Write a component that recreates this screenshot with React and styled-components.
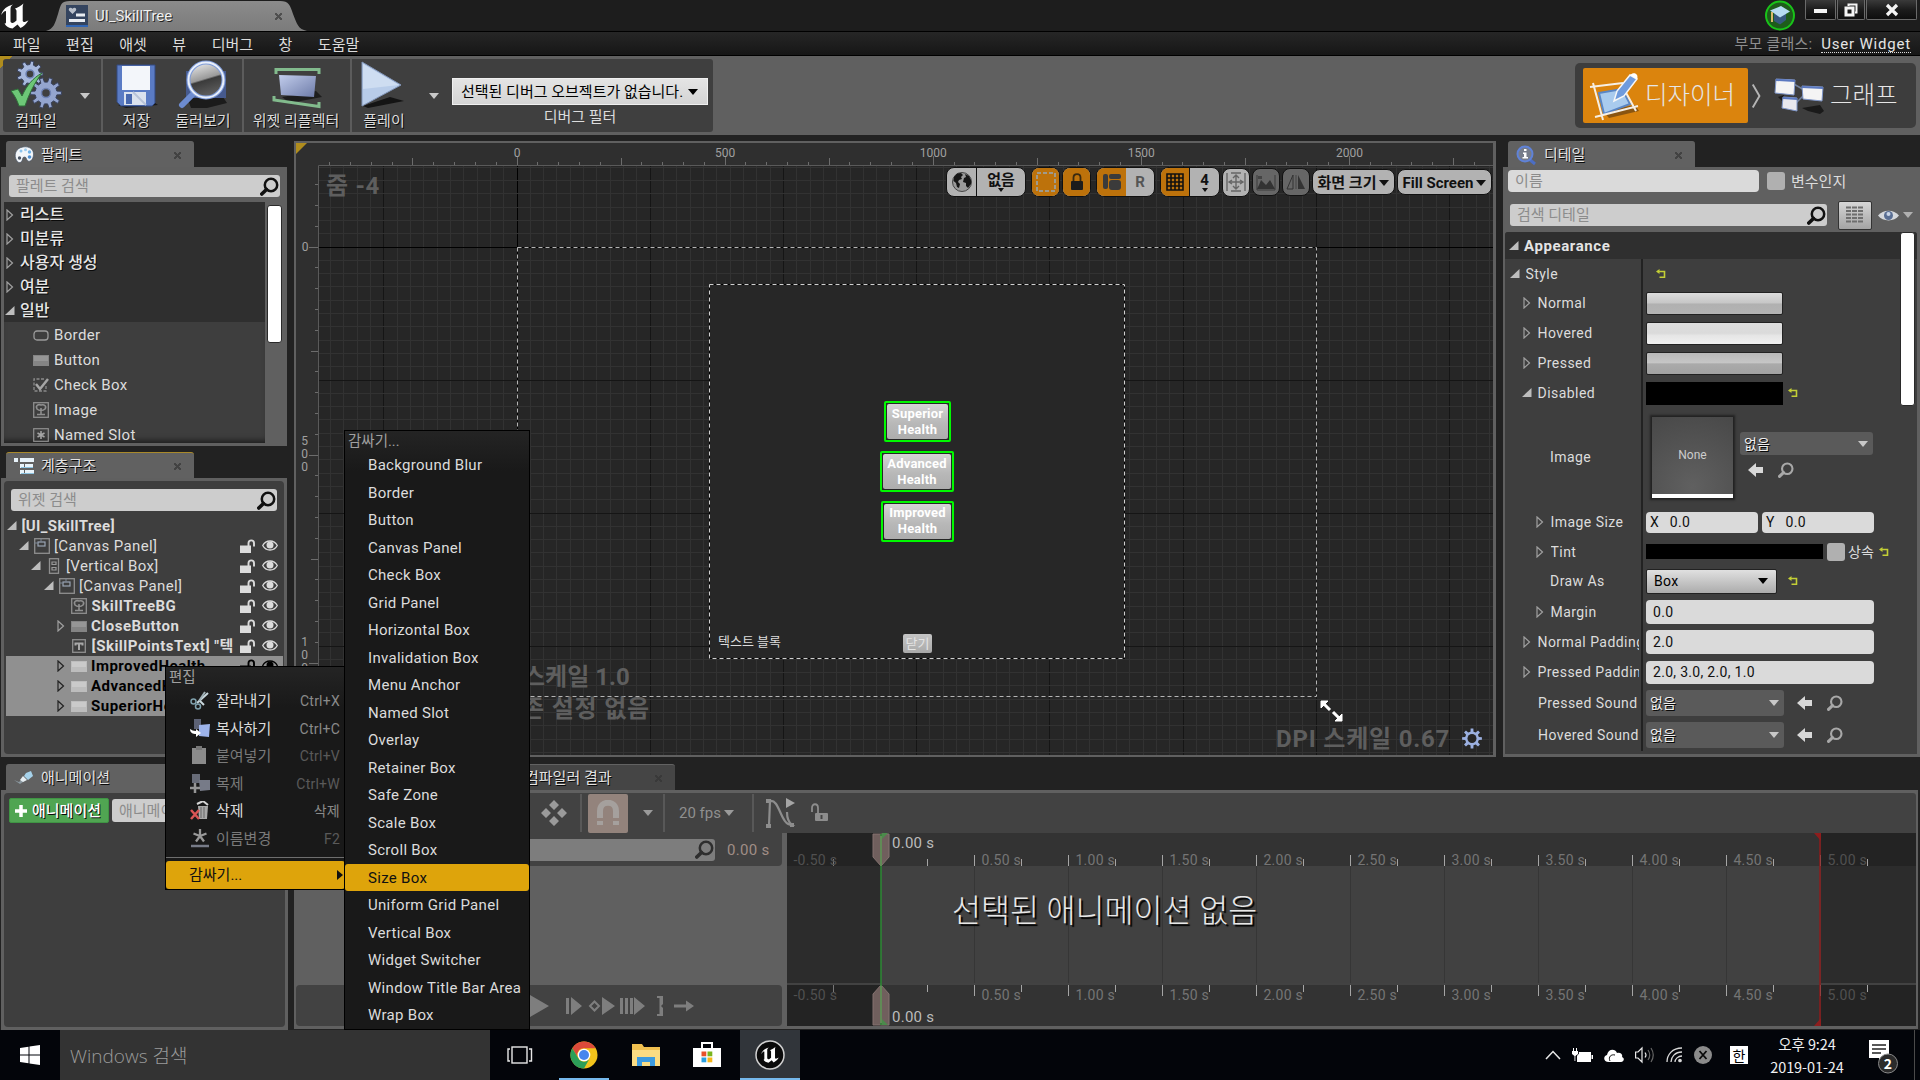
import React from "react";
import styled, { createGlobalStyle } from "styled-components";

const FONT = `Roboto, "Noto Sans CJK KR", sans-serif`;
const SHADOW = "1px 1px 0 #0a0a0a";

const GlobalStyle = createGlobalStyle`
  * { box-sizing: border-box; }
  body { margin: 0; background: #222; }
  svg { display: block; flex: none; }
`;

/* ---------- Shell ---------- */

const Shell = styled.div`
  position: relative;
  display: flex;
  flex-direction: column;
  width: 1920px;
  height: 1080px;
  overflow: hidden;
  background: #222;
  color: #dcdcdc;
  font: 15px/20px ${FONT};
  white-space: nowrap;
`;

const TitleBar = styled.header`
  display: flex;
  height: 31px;
  background: #1d1d1d;
`;
const LogoSlot = styled.div`
  width: 46px;
  padding-top: 3px;
`;
const DocTab = styled.div`
  display: flex;
  align-items: center;
  width: 261px;
  height: 30px;
  margin-top: 1px;
  padding: 0 25px 0 20px;
  background: linear-gradient(#8b8b8b, #7b7b7b);
  clip-path: path("M0 30 C8 28 9 22 12 13 C15 3 15 0 24 0 H234 C243 0 244 4 247 13 C251 23 252 28 261 30 Z");
`;
const DocTitle = styled.span`
  flex: 1;
  margin-left: 7px;
  color: #f0f0f0;
  font-size: 15px;
  text-shadow: 1px 1px 0 #222;
`;
const Cross = styled.span`
  width: 7px;
  height: 7px;
  background:
    linear-gradient(45deg, transparent 38%, #333 39%, #333 61%, transparent 62%),
    linear-gradient(-45deg, transparent 38%, #333 39%, #333 61%, transparent 62%);
  opacity: 0.65;
`;
const WindowControls = styled.div`
  display: flex;
  gap: 1px;
  margin: 0 3px 0 10px;
`;
const WindowButton = styled.div`
  display: flex;
  align-items: center;
  justify-content: center;
  width: ${(p) => p.$w}px;
  height: 20px;
  border: 1px solid #6a6a6a;
  border-top: 0;
  border-radius: 0 0 2px 2px;
  background: linear-gradient(#3a3a3a, #1c1c1c 50%, #0e0e0e);
`;
const Spacer = styled.div`
  flex: 1;
`;

const MenuBar = styled.nav`
  display: flex;
  align-items: center;
  gap: 25.5px;
  height: 25px;
  padding: 2px 9px 0 13px;
  border-top: 1px solid #000;
  border-bottom: 1px solid #000;
  background: linear-gradient(#262626, #161616);
`;
const ParentClass = styled.div`
  display: flex;
  gap: 9px;
  margin-left: auto;
  color: #8e8e8e;
  line-height: 17px;
  letter-spacing: 0.2px;
`;
const ClassLink = styled.span`
  border-bottom: 1px dotted #dcdcdc;
  height: 17px;
  color: #e4e4e4;
  letter-spacing: 0.8px;
`;

/* ---------- Top toolbar ---------- */

const ToolBar = styled.div`
  display: flex;
  justify-content: space-between;
  height: 79px;
  padding: 3px 4px 3px 3px;
  background: linear-gradient(135deg, #b08d1e 0 9px, transparent 9px), #606060;
`;
const ToolGroup = styled.div`
  display: flex;
  width: 710px;
  height: 73px;
  border-radius: 3px;
  background: #3f3f3f;
`;
const ToolSection = styled.div`
  display: flex;
  width: ${(p) => p.$w}px;
  padding-left: ${(p) => p.$pad || 0}px;
  border-right: ${(p) => (p.$last ? "0" : "2px solid #5c5c5c")};
`;
const ToolButton = styled.div`
  display: flex;
  flex-direction: column;
  align-items: center;
  width: ${(p) => p.$w}px;
  text-shadow: ${SHADOW};
  > svg { height: 50px; }
  > span { margin-top: 2px; line-height: 21px; }
`;
const Caret = styled.i`
  flex: none;
  width: 0;
  height: 0;
  margin: ${(p) => p.$m || "0"};
  border: ${(p) => p.$s || 5}px solid transparent;
  border-top: ${(p) => (p.$s || 5) + 1}px solid ${(p) => p.$c || "#c8c8c8"};
  border-bottom: 0;
`;
const DebugFilter = styled.div`
  display: flex;
  flex-direction: column;
  align-items: center;
  width: 256px;
  margin: 19px 0 0 6px;
  > span { margin-top: 2px; }
`;
const DebugCombo = styled.div`
  display: flex;
  align-items: center;
  justify-content: space-between;
  width: 256px;
  height: 27px;
  padding: 1px 9px 0 8px;
  border: 1px solid #f0f0f0;
  background: linear-gradient(#e4e4e4, #d4d4d4);
  color: #000;
`;
const ModeSwitch = styled.div`
  display: flex;
  align-items: center;
  width: 341px;
  height: 65px;
  margin-top: 4px;
  padding: 0 8px;
  border-radius: 5px;
  background: #3d3d3d;
`;
const Mode = styled.div`
  display: flex;
  align-items: center;
  gap: 6px;
  width: ${(p) => p.$w}px;
  height: 55px;
  padding-left: ${(p) => p.$pl ?? 6}px;
  border-radius: 2px;
  background: ${(p) => (p.$on ? "#db840d" : "transparent")};
  color: #e6e6e6;
  font-size: 24.5px;
  font-weight: 300;
`;

/* ---------- Docked panels ---------- */

const Workspace = styled.main`
  display: flex;
  flex-direction: column;
  gap: 7px;
  height: 895px;
  padding: 6px 0 0 1px;
`;
const UpperDock = styled.div`
  display: flex;
  gap: 7px;
  height: 616px;
`;
const LowerDock = styled.div`
  display: flex;
  gap: 6px;
  height: 266px;
`;
const LeftColumn = styled.div`
  display: flex;
  flex-direction: column;
  gap: 6px;
  width: 286px;
`;
const Dock = styled.section`
  display: flex;
  flex-direction: column;
  width: ${(p) => (p.$w ? p.$w + "px" : "auto")};
  flex: ${(p) => (p.$w ? "none" : 1)};
  min-height: 0;
`;
const PanelTab = styled.div`
  display: flex;
  align-items: center;
  flex: none;
  gap: 7px;
  width: ${(p) => p.$w || 188}px;
  height: 26px;
  margin-left: 5px;
  padding: 1px 13px 0 8px;
  border-top: 1px solid ${(p) => (p.$active ? "#a9892a" : "#626262")};
  border-radius: 3px 3px 0 0;
  background: ${(p) => p.$bg || "#616161"};
  color: #e2e2e2;
  text-shadow: ${SHADOW};
  > span:nth-child(2) { flex: 1; }
`;
const PanelBody = styled.div`
  display: flex;
  flex-direction: column;
  flex: 1;
  min-height: 0;
  padding: 3px 3px 3px ${(p) => p.$pl ?? 3}px;
  background: #606060;
`;
const PanelInner = styled.div`
  display: flex;
  flex-direction: column;
  flex: 1;
  padding: 8px 1px 0 2px;
  border-radius: 4px;
  background: #3e3e3e;
`;
const SearchField = styled.div`
  display: flex;
  align-items: center;
  justify-content: space-between;
  flex: none;
  width: ${(p) => p.$w}px;
  height: ${(p) => p.$h || 22}px;
  margin: ${(p) => p.$m || 0};
  padding: 0 1px 0 7px;
  border-radius: 3px;
  background: ${(p) => p.$bg || "#cdcdcd"};
  color: #8c8c8c;
`;

/* palette */
const PaletteScroll = styled.div`
  display: flex;
  flex: 1;
  margin-top: 5px;
  overflow: hidden;
`;
const PaletteList = styled.div`
  width: 261px;
  background: #3e3e3e;
  box-shadow: inset 0 -6px 6px -4px #1a1a1a;
`;
const Category = styled.div`
  display: flex;
  align-items: center;
  gap: 5px;
  height: 24px;
  padding: 1px 0 0 1px;
  background: #2f2f2f;
  color: #e6e6e6;
  font-size: 16px;
  font-weight: 500;
  text-shadow: ${SHADOW};
`;
const PaletteItem = styled.div`
  display: flex;
  align-items: center;
  gap: 5px;
  height: 25px;
  padding-left: 29px;
  letter-spacing: 0.35px;
`;
const ScrollThumb = styled.div`
  flex: none;
  width: 15px;
  height: ${(p) => p.$h}px;
  margin: ${(p) => p.$m};
  border: 1px solid #2a2a2a;
  border-radius: 3px;
  background: #fff;
`;

/* hierarchy */
const TreeRow = styled.div`
  display: flex;
  align-items: center;
  gap: 4.5px;
  height: 20px;
  padding: 0 5px 0 ${(p) => p.$indent}px;
  background: ${(p) => (p.$sel ? "#909090" : "transparent")};
  color: ${(p) => (p.$sel ? "#000" : "#dcdcdc")};
  font-weight: ${(p) => (p.$bold ? 700 : 400)};
  letter-spacing: ${(p) => (p.$bold && !p.$root ? 0.5 : 0.35)}px;
`;
const TreeLabel = styled.span`
  flex: 1;
  min-width: 0;
  overflow: hidden;
`;
const TreeActions = styled.span`
  display: flex;
  gap: 6px;
`;

/* ---------- Designer ---------- */

const Designer = styled.section`
  position: relative;
  width: 1202px;
  height: 616px;
  border: 2px solid #606060;
  border-right-width: 3px;
  background: #262626;
  overflow: hidden;
`;
const OnCanvas = styled.div`
  position: absolute;
  left: ${(p) => p.$x}px;
  top: ${(p) => p.$y}px;
  font-size: ${(p) => p.$fs || 15}px;
`;
const Hud = styled(OnCanvas)`
  color: #5e5e5e;
  font-size: 24px;
  font-weight: 700;
  line-height: 30px;
  letter-spacing: ${(p) => p.$ls || 0}px;
`;
const ViewTools = styled.div`
  position: absolute;
  top: 24px;
  right: 1px;
  display: flex;
  align-items: center;
  gap: 2px;
  height: 30px;
`;
const Pill = styled.div`
  display: flex;
  height: ${(p) => p.$h || 30}px;
  margin-left: ${(p) => p.$ml || 0}px;
  border: 1px solid #111;
  border-radius: 8px;
  overflow: hidden;
  background: ${(p) => p.$bg || "#b2b2b2"};
  color: #111;
  font-weight: 700;
`;
const PillCell = styled.div`
  position: relative;
  display: flex;
  align-items: center;
  justify-content: center;
  gap: 3px;
  width: ${(p) => p.$w}px;
  padding: ${(p) => p.$pt || 0}px 0 ${(p) => p.$pb || 0}px;
  border-left: ${(p) => (p.$div ? "1px solid #111" : "0")};
  background: ${(p) => (p.$on ? "#bd720b" : "transparent")};
  color: ${(p) => p.$c || "#111"};
`;
const TinyCaret = styled(Caret)`
  position: absolute;
  bottom: 4px;
  left: calc(50% - 3px);
`;
const WidgetButton = styled(OnCanvas)`
  width: ${(p) => p.$w}px;
  height: 41px;
  padding: 1px;
  border: 2px solid #00f800;
  border-radius: 2px;
  background: #262626;
`;
const WidgetFace = styled.div`
  height: 100%;
  padding-top: ${(p) => p.$pt ?? 2}px;
  border-radius: 2px;
  background: linear-gradient(#d4d4d4, #b8b8b8 55%, #adadad);
  color: #fff;
  font-size: 13px;
  font-weight: 700;
  line-height: 15.5px;
  letter-spacing: 0.2px;
  text-align: center;
`;
const CloseWidget = styled(OnCanvas)`
  width: 29px;
  height: 19px;
  border-radius: 2px;
  background: linear-gradient(#c4c4c4, #a9a9a9);
  color: #e4e4e4;
  font-size: 13px;
  line-height: 19px;
  text-align: center;
`;

/* ---------- Details ---------- */

const NameRow = styled.div`
  display: flex;
  flex: none;
  align-items: center;
  height: 22px;
  padding-left: 3px;
  > span:last-child { padding-top: 2px; }
`;
const FilterRow = styled.div`
  display: flex;
  flex: none;
  align-items: center;
  height: 40px;
  padding: 6px 0 0 5px;
`;
const TextField = styled.div`
  width: ${(p) => p.$w}px;
  height: ${(p) => p.$h || 22}px;
  padding-left: 7px;
  border-radius: 4px;
  background: #dadada;
  color: ${(p) => p.$c || "#111"};
  font-size: ${(p) => p.$fs || 14}px;
  line-height: ${(p) => p.$h || 22}px;
  letter-spacing: 0.3px;
`;
const AxisField = styled(TextField)`
  padding-left: 4px;
  margin-right: 4px;
  word-spacing: 7px;
`;
const CheckBox = styled.span`
  width: 18px;
  height: 18px;
  margin: 0 ${(p) => p.$mr || 6}px 0 ${(p) => p.$ml || 8}px;
  border-radius: 3px;
  background: #b0b0b0;
`;
const Inherit = styled.span`
  margin-right: 5px;
  font-size: 14px;
`;
const GridButton = styled.div`
  display: flex;
  align-items: center;
  justify-content: center;
  width: 34px;
  height: 29px;
  margin: 0 6px 0 11px;
  border: 1px solid #333;
  border-radius: 2px;
  background: linear-gradient(#d6d6d6, #a4a4a4);
`;
const PropertyArea = styled.div`
  position: relative;
  flex: 1;
  width: 412px;
  background: #3e3e3e;
  border-radius: 3px 3px 0 0;
`;
const SectionHead = styled.div`
  display: flex;
  align-items: center;
  gap: 5px;
  height: 27px;
  padding-left: 4px;
  border-radius: 3px 3px 0 0;
  background: #2f2f2f;
  color: #e4e4e4;
  font-size: 15px;
  font-weight: 700;
  letter-spacing: 0.6px;
`;
const PropRow = styled.div`
  display: flex;
  height: ${(p) => p.$h}px;
`;
const PropName = styled.div`
  display: flex;
  align-items: center;
  gap: 5.5px;
  width: 138px;
  padding-left: ${(p) => p.$indent}px;
  padding-right: 2px;
  border-right: 2px solid #222;
  font-size: 14px;
  letter-spacing: 0.45px;
  overflow: hidden;
  > span { overflow: hidden; flex: 1; }
`;
const PropValue = styled.div`
  display: flex;
  align-items: center;
  padding-left: ${(p) => p.$pl ?? 3}px;
`;
const Swatch = styled.div`
  width: ${(p) => p.$w}px;
  height: ${(p) => p.$h}px;
  margin-right: ${(p) => p.$mr || 0}px;
  border: ${(p) => (p.$flat ? "0" : "1px solid #222")};
  border-radius: ${(p) => (p.$flat ? 0 : 2)}px;
  background: ${(p) => p.$bg};
`;
const Thumb = styled.div`
  display: flex;
  align-items: center;
  justify-content: center;
  width: 81px;
  height: 81px;
  margin: 0 7px 0 6px;
  border-bottom: 4px solid #fff;
  background: radial-gradient(circle at 50% 90%, #606060, #484848);
  box-shadow: 0 0 2px 2px #222;
  font-size: 12px;
  color: #ccc;
`;
const AssetCombo = styled.div`
  display: flex;
  align-items: center;
  justify-content: space-between;
  width: ${(p) => p.$w}px;
  height: ${(p) => p.$h}px;
  padding: 0 5px 0 4px;
  border-radius: 3px;
  background: #5a5a5a;
  color: #eee;
  font-size: 14px;
  text-shadow: ${SHADOW};
`;
const AssetStack = styled.div`
  display: flex;
  flex-direction: column;
  gap: 7px;
  margin-top: -4px;
`;
const AssetButtons = styled.div`
  display: flex;
  align-items: center;
  gap: 15px;
  padding-left: ${(p) => p.$pl || 0}px;
`;
const EnumCombo = styled.div`
  display: flex;
  align-items: center;
  justify-content: space-between;
  width: 131px;
  height: 25px;
  margin-right: 11px;
  padding: 0 8px 0 7px;
  border: 1px solid #222;
  border-radius: 2px;
  background: linear-gradient(#e0e0e0, #acacac);
  color: #000;
  font-size: 14px;
  letter-spacing: 0.3px;
`;
const PropScroll = styled(ScrollThumb)`
  position: absolute;
  top: 0;
  right: 2px;
`;

/* ---------- Animation + timeline ---------- */

const AnimBar = styled.div`
  display: flex;
  gap: 3px;
  margin: -3px 0 0 3px;
`;
const AddAnimation = styled.div`
  display: flex;
  align-items: center;
  gap: 4px;
  width: 100px;
  height: 25px;
  padding: 1px 0 0 4px;
  border: 1px solid #3f9444;
  border-radius: 2px;
  background: #50a552;
  color: #fff;
  font-weight: 500;
  text-shadow: ${SHADOW};
`;
const SequencerBody = styled.div`
  display: flex;
  flex-direction: column;
  height: 239px;
  width: 1624px;
  padding: 3px 2px 3px 2px;
  background: #606060;
`;
const TabGap = styled.i`
  width: 211px;
`;
const SeqToolbar = styled.div`
  display: flex;
  align-items: center;
  height: 40px;
  padding-left: 245px;
  border-radius: 3px 3px 0 0;
  background: #424242;
  color: #8f8f8f;
`;
const SeqDivider = styled.i`
  width: 2px;
  height: 38px;
  margin: 0 ${(p) => p.$mr}px 0 ${(p) => p.$ml}px;
  background: #585858;
`;
const SnapButton = styled.div`
  display: flex;
  align-items: center;
  justify-content: center;
  width: 40px;
  height: 39px;
  border-radius: 2px;
  background: #93837c;
`;
const SeqSplit = styled.div`
  display: flex;
  gap: 5px;
  flex: 1;
`;
const TrackColumn = styled.div`
  display: flex;
  flex-direction: column;
  justify-content: space-between;
  width: 486px;
`;
const TrackSearch = styled.div`
  display: flex;
  align-items: center;
  gap: 12px;
  height: 33px;
  padding-left: 48px;
  border-radius: 0 0 4px 4px;
  background: #424242;
  color: #a08e86;
  letter-spacing: 0.3px;
`;
const Transport = styled.div`
  display: flex;
  align-items: center;
  height: 41px;
  padding-left: 231px;
  border-radius: 4px;
  background: #424242;
`;
const Timeline = styled.div`
  position: relative;
  width: 1129px;
`;
const EmptyNotice = styled.div`
  position: absolute;
  left: 165px;
  top: 58px;
  color: #e8e8e8;
  font-size: 31.5px;
  font-weight: 300;
  line-height: 41px;
  text-shadow: 2px 2px 1px #000;
`;

/* ---------- Popup menus ---------- */

const Popup = styled.div`
  position: absolute;
  left: ${(p) => p.$x}px;
  top: ${(p) => p.$y}px;
  width: ${(p) => p.$w}px;
  height: ${(p) => p.$h}px;
  border: 1px solid #000;
  background: linear-gradient(#242424, #191919 40px);
`;
const PopupTitle = styled.div`
  height: 20px;
  padding-left: 3px;
  color: #a0a0a0;
  font-size: 14.5px;
  line-height: 21px;
`;
const PopupItem = styled.div`
  display: flex;
  align-items: center;
  height: 27.5px;
  padding: 1px ${(p) => p.$pr || 0}px 0 ${(p) => p.$pl || 23}px;
  border-radius: 3px;
  background: ${(p) => (p.$on ? "#dea40b" : "transparent")};
  color: ${(p) => (p.$on ? "#111" : p.$off ? "#7a7a7a" : "#dcdcdc")};
  letter-spacing: ${(p) => p.$ls || 0}px;
`;
const ItemLabel = styled.span`
  flex: 1;
  margin-left: ${(p) => p.$ml || 0}px;
`;
const Shortcut = styled.span`
  color: ${(p) => (p.$off ? "#5a5a5a" : "#8a8a8a")};
  font-size: 14px;
  letter-spacing: 0.25px;
`;
const PopupRule = styled.div`
  height: 1px;
  margin: 5px 0 3px;
  background: #6e6e6e;
`;

/* ---------- Windows taskbar ---------- */

const TaskBar = styled.footer`
  display: flex;
  height: 50px;
  background: #03050a;
  font-family: "Noto Sans CJK KR", sans-serif;
`;
const StartButton = styled.div`
  display: flex;
  align-items: center;
  justify-content: center;
  width: 60px;
`;
const TaskSearch = styled.div`
  width: 430px;
  padding-left: 10px;
  background: #333;
  color: #9b9b9b;
  font: 300 19px/52px "Open Sans", "Noto Sans CJK KR", sans-serif;
`;
const TaskButton = styled.div`
  display: flex;
  align-items: center;
  justify-content: center;
  width: ${(p) => p.$w}px;
  padding-top: 2px;
  border-bottom: 2px solid ${(p) => (p.$run ? "#76b9ed" : "transparent")};
  margin: 0 ${(p) => p.$mx || 0}px;
  background: ${(p) => (p.$on ? "#31353a" : "transparent")};
`;
const Tray = styled.div`
  display: flex;
  align-items: center;
  gap: 11px;
  margin-left: auto;
`;
const Ime = styled.span`
  width: 18px;
  height: 18px;
  margin: 0 0 0 7px;
  background: #fff;
  color: #000;
  font-size: 14px;
  line-height: 18px;
  text-align: center;
`;
const Clock = styled.div`
  width: 80px;
  margin: 0 9px 0 8px;
  color: #f0f0f0;
  font-size: 14.5px;
  line-height: 23px;
  letter-spacing: -0.1px;
  text-align: center;
`;
const PeekEdge = styled.i`
  width: 1px;
  height: 50px;
  margin: 0 5px 0 4px;
  background: #4a4a4a;
`;

/* ---------- Icons ---------- */

function gear(cx, cy, ro, ri, n) {
  let d = "";
  for (let i = 0; i < n; i++) {
    const a = (i / n) * Math.PI * 2;
    const s = Math.PI / n;
    [[-0.55, ri], [-0.35, ro], [0.35, ro], [0.55, ri]].forEach(([k, r], j) => {
      const x = cx + Math.cos(a + k * s) * r;
      const y = cy + Math.sin(a + k * s) * r;
      d += `${i === 0 && j === 0 ? "M" : "L"}${x.toFixed(2)} ${y.toFixed(2)}`;
    });
  }
  return d + "Z";
}

const UNREAL = "M1 12C3 6 7 3 13 1.500C11 3 10.500 4 10.500 6V18.500C11.200 20 12.500 20.400 14 19.500L16.500 17.500V8C16.500 6.800 15.600 6 14.800 5.800C17.500 4.800 21.500 2.500 23.500.5C22.700 2.500 22.700 3.600 22.700 5V18C23.400 19.600 24.800 19.500 28.500 17.300C26.500 21 23.500 23.500 20.500 25L17.500 21.500L12.500 25.500C9 25 6 23.500 4.500 20.500C5.500 20.600 6 20.200 6 19V8.500C6 7.500 4.500 7.200 1 12Z";

const UnrealMark = () => (
  <svg width="30" height="26" viewBox="0 0 30 26"><path fill="#fff" d={UNREAL} /></svg>
);
const WidgetIcon = () => (
  <svg width="22" height="22" viewBox="0 0 22 22">
    <rect width="22" height="22" fill="#34445f" />
    <rect y="20" width="22" height="2" fill="#2f65b5" />
    <path fill="#b9c0cb" d="M6.500 9L3 5.500C2 3.500 4.500 1.500 6.500 3.800C8.500 1.500 11 3.500 10 5.500Z" />
    <path fill="#e8ecf2" d="M10 8.500H19V11.500H10ZM3 14H19V17H3Z" />
  </svg>
);
const Magnifier = ({ s = 19, c = "#111", w = 2.8 }) => (
  <svg width={s} height={s} viewBox="0 0 19 19" fill="none" stroke={c}>
    <circle cx="11" cy="8" r="6.200" strokeWidth={w * 0.9} />
    <path d="M6.500 12.500L1.800 17" strokeWidth={w * 1.3} strokeLinecap="round" />
  </svg>
);
const GraduationBadge = () => (
  <svg width="30" height="31" viewBox="0 0 30 31">
    <circle cx="15" cy="15.500" r="14" fill="#1e5c1b" stroke="#19c319" strokeWidth="2" />
    <path fill="#35587d" d="M9 14V21L15 24.500L21 20V13Z" />
    <path fill="#b5dcf2" d="M5 10.500L16 6L25 11.500L15 17.500Z" />
    <path d="M7 12V22" stroke="#d9b96c" strokeWidth="2" />
  </svg>
);
const CompileIcon = () => (
  <svg width="54" height="50" viewBox="0 0 54 50">
    <path d={gear(21, 15, 13, 9.5, 9)} fill="#a7b8dd" stroke="#38415c" />
    <circle cx="21" cy="15" r="4" fill="#3f3f3f" stroke="#6f83b5" strokeWidth="1.500" />
    <path d={gear(37, 34, 15.5, 11, 10)} fill="#94a5cf" stroke="#38415c" />
    <circle cx="37" cy="34" r="4.500" fill="#3f3f3f" stroke="#6f83b5" strokeWidth="1.500" />
    <path d="M2 32L9 30L13 37C18 26 24 19 33 14C26 23 20 35 16 47H10C8 41 6 37 2 32Z" fill="#6dc777" stroke="#2e6f38" />
  </svg>
);
const SaveIcon = () => (
  <svg width="44" height="50" viewBox="0 0 44 50">
    <path d="M38 42L44 46L12 49L4 46Z" fill="#191919" />
    <path d="M3 6H41V44L38 47H7L3 43Z" fill="#5a7bc4" stroke="#334a82" />
    <rect x="8" y="7" width="28" height="24" fill="#f3f6fa" />
    <rect x="10" y="33" width="22" height="13" fill="#dbe2ee" />
    <rect x="12" y="35" width="6" height="10" fill="#4868af" />
    <path d="M19 33L32 46" stroke="#b8c3d8" strokeWidth="2" />
  </svg>
);
const BrowseIcon = () => (
  <svg width="52" height="50" viewBox="0 0 52 50">
    <defs>
      <linearGradient id="lens" x1="0" y1="0" x2="0.300" y2="1">
        <stop offset="0" stopColor="#f4f4f4" />
        <stop offset="0.550" stopColor="#9a9a9a" />
        <stop offset="0.600" stopColor="#3b3b3b" />
        <stop offset="1" stopColor="#5c5c5c" />
      </linearGradient>
    </defs>
    <path d="M10 38H46L50 44L30 49H14Z" fill="#1b1b1b" />
    <rect x="9" y="12" width="40" height="27" fill="#465a8e" />
    <path d="M5 46L17 34" stroke="#6d8cd0" strokeWidth="6" strokeLinecap="round" />
    <circle cx="29" cy="21" r="17.500" fill="url(#lens)" stroke="#7e9bd8" strokeWidth="4" />
    <circle cx="29" cy="21" r="17.500" fill="none" stroke="#e9effa" strokeWidth="2" />
  </svg>
);
const ReflectorIcon = () => (
  <svg width="52" height="50" viewBox="-2 0 52 50">
    <defs>
      <linearGradient id="refl" x1="0" y1="0" x2="1" y2="1">
        <stop offset="0" stopColor="#c2cdec" />
        <stop offset="1" stopColor="#6d7ba8" />
      </linearGradient>
    </defs>
    <path d="M10 38L44 32L50 38L18 44Z" fill="#1d1d1d" />
    <path d="M7 16L44 17L42 38L9 36Z" fill="url(#refl)" />
    <path d="M4 15V10.500H47V15M2 37V41L47 47.500V43" fill="none" stroke="#82bb8d" strokeWidth="3" />
  </svg>
);
const PlayBig = () => (
  <svg width="46" height="50" viewBox="1 0 46 50">
    <path d="M3 47L30 38L44 42L8 49Z" fill="#141414" />
    <path d="M2 3L41 26L2 47Z" fill="#b8cce9" stroke="#8296b9" />
    <path d="M3 5L39 26L3 30Z" fill="#ceddf1" />
  </svg>
);
const DesignerIcon = () => (
  <svg width="50" height="50" viewBox="0 0 50 50">
    <path d="M14 40L46 34L50 40L20 47Z" fill="#8a5510" />
    <path d="M10 22L33 18L41 33L15 43Z" fill="#a9cbee" stroke="#5a86c5" strokeWidth="2" />
    <path d="M1 16L34 12M4 12L14 49M6 46L49 35M35 18L47 40" stroke="#f6efe4" strokeWidth="2" fill="none" />
    <path d="M25 30L28 20L41 4L48 8L35 25Z" fill="#6f9bdd" stroke="#f7f7f7" strokeWidth="1.500" />
    <path d="M41 4L48 8C50 3 45 0 41 4Z" fill="#fff" />
  </svg>
);
const GraphIcon = () => (
  <svg width="50" height="42" viewBox="0 0 50 42">
    <path d="M28 33L46 30L50 36L46 39L34 36ZM4 22L10 20L10 28Z" fill="#1a1a1a" />
    <path d="M18 8L32 16M22 28L32 18" stroke="#71809d" strokeWidth="1.500" />
    <g stroke="#7f96c9">
      <path d="M2 4L21 5L20 20L1 18Z" fill="#f4f4f4" />
      <path d="M28 11L49 12L48 26L29 24Z" fill="#f4f4f4" />
      <path d="M9 22L23 23L23 36L8 33Z" fill="#e8e8ee" />
    </g>
    <path d="M2 4L21 5V7L2 6ZM28 11L49 12V14L28 13ZM9 22L23 23V25L9 24Z" fill="#5a78c0" />
  </svg>
);
const PaletteGlyph = () => (
  <svg width="20" height="18" viewBox="0 0 20 18">
    <path fill="#f2f6fa" stroke="#3d4a5c" strokeWidth=".6" d="M3 15C-1 9 2 2 9 1C15 0 20 3 19.500 9C19 14 16 16 14 15C12 14 13 11 10.500 11C8 11 9 14 7.500 15.500C6.500 17 4 17 3 15Z" />
    <circle cx="7" cy="5" r="1.500" fill="#8cc4ee" />
    <circle cx="11.500" cy="3.800" r="1.500" fill="#a2cdec" />
    <circle cx="15.500" cy="6" r="1.700" fill="#6fb2e6" />
    <circle cx="15.500" cy="11" r="1.800" fill="#4e8fd0" />
    <circle cx="5.500" cy="12" r="1.700" fill="#4a5666" />
  </svg>
);
const HierarchyGlyph = () => (
  <svg width="20" height="16" viewBox="0 0 20 16">
    <path fill="#e8f3fa" d="M0 0H4V4H0ZM6 0H20V4H6ZM6 6H10V10H6ZM11 6H19V10H11ZM6 12H10V16H6ZM11 12H20V16H11Z" />
    <path fill="#8bc1df" d="M7 9H19V10H7ZM7 15H20V16H7Z" />
  </svg>
);
const InfoGlyph = () => (
  <svg width="21" height="21" viewBox="0 0 21 21">
    <path d="M13 14L19 19" stroke="#4c6ec4" strokeWidth="3" />
    <circle cx="9" cy="9" r="7.500" fill="#777d8a" stroke="#5f82d8" strokeWidth="2" />
    <path d="M8 4H10.500V6H8ZM7 7.500H10.500V12H12V13.500H6.500V12H8V9H7Z" fill="#fff" />
  </svg>
);
const BrushGlyph = () => (
  <svg width="20" height="16" viewBox="0 0 20 16">
    <path d="M0 10L6 14L12 10L8 9L5 12Z" fill="#8b98a0" />
    <path d="M9 6L13 10L9 12L6 10Z" fill="#e6eef2" />
    <path d="M12 3L17 1L19 6L14 10L10 6Z" fill="#a6d2ea" />
  </svg>
);
const Arrow = ({ open, sel }) =>
  open ? (
    <svg width="10" height="10" viewBox="0 0 10 10"><path d="M9.500 0V9H0Z" fill="#bdbdbd" /></svg>
  ) : (
    <svg width="10" height="12" viewBox="0 0 10 12"><path d="M2 1L7.500 6L2 11Z" fill="none" stroke={sel ? "#222" : "#a0a0a0"} strokeWidth="1.200" /></svg>
  );

const KIND = {
  border: <rect x="1" y="4" width="14" height="9" rx="3" fill="none" stroke="#9a9a9a" strokeWidth="1.300" />,
  button: <><rect x="0" y="3" width="16" height="11" fill="#848484" /><rect x="1" y="4" width="14" height="5" fill="#969696" /></>,
  check: <><path d="M11 2H1V14H13V8" fill="none" stroke="#8a8a8a" strokeDasharray="3 1.500" strokeWidth="1.300" /><path d="M3 7L7 12L15 2" fill="none" stroke="#a5a5a5" strokeWidth="2.500" /></>,
  image: <><rect x=".7" y=".7" width="14.600" height="14.600" fill="none" stroke="#8f8f8f" strokeWidth="1.300" /><path d="M4 7C2 3 6 2 8 3C11 2 14 4 12 7C10 9 6 9 4 7ZM8 6V12M4 12.500H12" fill="none" stroke="#8f8f8f" strokeWidth="1.600" /></>,
  slot: <><rect x=".7" y="1.700" width="14.600" height="12.600" fill="none" stroke="#8f8f8f" strokeWidth="1.200" /><path d="M8 4V12M4.500 6L11.500 10M11.500 6L4.500 10" stroke="#a5a5a5" strokeWidth="1.500" /></>,
  canvas: <><rect x=".7" y=".7" width="14.600" height="14.600" fill="none" stroke="#8f8f8f" strokeWidth="1.300" /><rect x="4" y="4" width="7" height="4" fill="none" stroke="#9aa5b5" strokeWidth="1.200" /><path d="M0 5H4M7 0V4" stroke="#7d8794" /></>,
  vbox: <><rect x="3.500" y=".7" width="9" height="14.600" fill="none" stroke="#8f8f8f" strokeWidth="1.300" /><path d="M6 4H10V6.500H6ZM6 9.500H10V12H6Z" fill="none" stroke="#9a9a9a" strokeWidth="1.200" /></>,
  text: <><rect x="1.700" y="1.700" width="12.600" height="12.600" fill="none" stroke="#8f8f8f" strokeWidth="1.300" /><path d="M4.500 5.500H11.500M4.500 4.500V7.500M11.500 4.500V7.500M8 4.500V12" fill="none" stroke="#a8a8a8" strokeWidth="2" /></>,
  selbutton: <><rect x="0" y="3" width="16" height="11" fill="#bdbdbd" /><rect x="1" y="4" width="14" height="5" fill="#cacaca" /></>,
};
const KindIcon = ({ k }) => <svg width="16" height="16" viewBox="0 0 16 16">{KIND[k]}</svg>;

const OpenLock = ({ c }) => (
  <svg width="16" height="15" viewBox="0 0 16 15">
    <rect x="0" y="6.500" width="11" height="7.500" fill={c} />
    <path d="M8.500 7V4C8.500 .5 14 .5 14 4V7.500" fill="none" stroke={c} strokeWidth="1.900" />
  </svg>
);
const Eye = ({ c }) => (
  <svg width="16" height="13" viewBox="0 0 16 13">
    <path d="M.7 6.500C4 .5 12 .5 15.300 6.500C12 12.500 4 12.500 .7 6.500Z" fill="none" stroke={c} strokeWidth="1.300" />
    <circle cx="8" cy="6" r="3.500" fill={c} />
  </svg>
);
const ResetArrow = () => (
  <svg width="10" height="10" viewBox="0 0 10 10">
    <path d="M1.500 2.500H8.500V8.300H3.500" fill="none" stroke="#c3cf36" strokeWidth="1.600" />
    <path d="M0 2.500L3.500 0V5Z" fill="#c3cf36" />
  </svg>
);
const UseArrow = () => (
  <svg width="15" height="14" viewBox="0 0 15 14">
    <path d="M0 7L8 0V4H15V10H8V14Z" fill="#d8d8d8" />
  </svg>
);

const MENU_ICON = {
  cut: <><path d="M7 12L18 2M9 9L14 14" stroke="#c9d8dd" strokeWidth="2" /><path d="M9 10L15 1" stroke="#9fb0b6" strokeWidth="2" /><circle cx="3.500" cy="10.500" r="2.500" fill="none" stroke="#7fa0ac" strokeWidth="1.500" /><circle cx="8" cy="15.500" r="2.500" fill="none" stroke="#7fa0ac" strokeWidth="1.500" /></>,
  copy: <><path d="M4 0H11V10H4Z" fill="#5d6275" /><path d="M9 6L20 5L19 18L9 17Z" fill="#9db3ea" /><path d="M0 10C0 14 3 15 6 15V18L11 14L6 10V12C3 12 2 11 0 10Z" fill="#fff" /></>,
  paste: <><path d="M2 2H16V18H2Z" fill="#8b8b8b" /><path d="M6 0H12V4H6Z" fill="#777" /></>,
  dup: <><path d="M2 0H10V9H2Z" fill="#686c78" /><path d="M9 6H20V16L10 17Z" fill="#777b88" /><path d="M5 9V19M0 14H10" stroke="#959595" strokeWidth="2.500" /></>,
  del: <><path d="M8 5H18L17 18H9Z" fill="#a8a8a8" /><path d="M7 3L13 0L18 4" fill="none" stroke="#d5d5d5" strokeWidth="2" /><path d="M11 6V17M14 6V17" stroke="#666" /><path d="M1 9L9 18M9 9L1 18" stroke="#d95555" strokeWidth="2.500" /></>,
  rename: <><path d="M10 0V7M3.500 4.500L10 7L16.500 4.500M6 12.500L10 7L14 12.500" stroke="#999" strokeWidth="2.300" fill="none" /><path d="M1 17H19" stroke="#777b88" strokeWidth="2.500" /></>,
};

/* ---------- Data ---------- */

const PALETTE_GROUPS = ["리스트", "미분류", "사용자 생성", "여분"];
const PALETTE_ITEMS = [["border", "Border"], ["button", "Button"], ["check", "Check Box"], ["image", "Image"], ["slot", "Named Slot"]];

const TREE = [
  { i: 1, open: true, label: "[UI_SkillTree]", bold: true, root: true },
  { i: 13, open: true, k: "canvas", label: "[Canvas Panel]" },
  { i: 25, open: true, k: "vbox", label: "[Vertical Box]" },
  { i: 38, open: true, k: "canvas", label: "[Canvas Panel]" },
  { i: 65, k: "image", label: "SkillTreeBG", bold: true },
  { i: 50, open: false, k: "button", label: "CloseButton", bold: true },
  { i: 65, k: "text", label: '[SkillPointsText] "텍', bold: true },
  { i: 50, open: false, k: "selbutton", label: "ImprovedHealth", bold: true, sel: true },
  { i: 50, open: false, k: "selbutton", label: "AdvancedHealth", bold: true, sel: true },
  { i: 50, open: false, k: "selbutton", label: "SuperiorHealth", bold: true, sel: true },
];

const WRAP_ITEMS = [
  "Background Blur", "Border", "Button", "Canvas Panel", "Check Box", "Grid Panel", "Horizontal Box",
  "Invalidation Box", "Menu Anchor", "Named Slot", "Overlay", "Retainer Box", "Safe Zone", "Scale Box",
  "Scroll Box", "Size Box", "Uniform Grid Panel", "Vertical Box", "Widget Switcher", "Window Title Bar Area", "Wrap Box",
];
const EDIT_ITEMS = [
  ["cut", "잘라내기", "Ctrl+X", false],
  ["copy", "복사하기", "Ctrl+C", false],
  ["paste", "붙여넣기", "Ctrl+V", true],
  ["dup", "복제", "Ctrl+W", true],
  ["del", "삭제", "삭제", false],
  ["rename", "이름변경", "F2", true],
];

/* ---------- Drawn surfaces ---------- */

/* The designer's origin (0,0) sits at this offset inside the viewport. */
const OX = 221.5;
const OY = 104.5;
const UNIT = 0.4162;

function DesignSurface() {
  const W = 1197, H = 612;
  const lines = [];
  const tone = (n) => (n === 0 ? "#000" : n % 10 === 0 ? "#151515" : "#323232");
  for (let n = -15; n < 75; n++) {
    const x = Math.round(OX + n * 13.32) - 0.5;
    if (x > 23 && x < W) lines.push(<path key={"x" + n} d={`M${x} 23V${H}`} stroke={tone(n)} />);
  }
  for (let n = -6; n < 40; n++) {
    const y = Math.round(OY + n * 13.3) - 0.5;
    if (y > 23 && y < H) lines.push(<path key={"y" + n} d={`M23 ${y}H${W}`} stroke={tone(n)} />);
  }
  const ticks = [];
  const tickLength = (n) => (n % 10 === 0 ? 9 : n % 5 === 0 ? 7 : 3);
  for (let n = -9; n < 47; n++) {
    const x = Math.round(OX + n * 50 * UNIT) - 0.5;
    if (x > 23) ticks.push(<path key={"tx" + n} d={`M${x} ${22 - tickLength(n)}V22`} stroke="#6c6c6c" />);
  }
  for (let n = -3; n < 25; n++) {
    const y = Math.round(OY + n * 50 * UNIT) - 0.5;
    if (y > 23) ticks.push(<path key={"ty" + n} d={`M${22 - tickLength(n)} ${y}H22`} stroke="#6c6c6c" />);
  }
  return (
    <svg width={W} height={H} viewBox={`0 0 ${W} ${H}`}>
      {lines}
      <rect width={W} height="22" fill="#2f2f2f" />
      <rect width="22" height={H} fill="#2f2f2f" />
      <path d={`M22.500 ${H}V22.500H${W}`} fill="none" stroke="#5a5a5a" />
      <path d="M0 0H11L0 11Z" fill="#b08d1e" />
      {ticks}
      <g fill="#a0a0a0" fontFamily="Roboto" fontSize="12" textAnchor="middle">
        {[0, 500, 1000, 1500, 2000].map((v) => (
          <text key={v} x={OX + v * UNIT - 0.5} y="14">{v}</text>
        ))}
        <text x="9" y="108">0</text>
        {["5", "0", "0"].map((c, i) => <text key={i} x="8.500" y={302 + i * 13}>{c}</text>)}
        {["1", "0", "0", "0"].map((c, i) => <text key={i} x="8.500" y={503 + i * 13}>{c}</text>)}
      </g>
      <rect x="221.500" y="104.500" width="799" height="449" fill="none" stroke="#b4b4b4" strokeDasharray="4 3" />
      <rect x="413.500" y="141.500" width="415" height="374" fill="#272727" stroke="#000" />
      <rect x="413.500" y="141.500" width="415" height="374" fill="none" stroke="#d0d0d0" strokeDasharray="4 3" />
      <g fill="#fff" stroke="#fff">
        <path d="M1025 558H1032L1025 565ZM1046 578H1039L1046 571Z" />
        <path d="M1028 561L1034 567M1037 569L1043 575" strokeWidth="3" />
      </g>
      <path d={gear(1176, 595.5, 10, 7, 8)} fill="#9bb0e0" />
      <circle cx="1176" cy="595.500" r="4.500" fill="#262626" />
    </svg>
  );
}

function TimelineChart() {
  const W = 1129, H = 193, Z = 93.8, STEP = 94.06;
  const marks = [];
  for (let i = -1; i <= 10; i++) {
    const x = Math.round(Z + i * STEP) - 0.5;
    const mid = Math.round(Z + (i + 0.5) * STEP) - 0.5;
    const label = (i * 0.5).toFixed(2) + " s";
    const c = i < 0 || i === 10 ? "#505050" : "#757575";
    marks.push(
      <g key={i}>
        {i > 0 && i < 10 && <path d={`M${x} 33V150`} stroke="#363636" />}
        {i > 0 && <path d={`M${x} 22V33M${x} 152V163`} stroke="#a5a5a5" />}
        <path d={`M${mid} 26V33M${mid} 152V159`} stroke={i < 0 ? "#777" : "#a5a5a5"} />
        {i !== 0 && <text x={x + 7} y="31.500" fill={c}>{label}</text>}
        {i !== 0 && <text x={x + 7} y="166.500" fill={c}>{label}</text>}
      </g>
    );
  }
  return (
    <svg width={W} height={H} viewBox={`0 0 ${W} ${H}`} fontFamily="Roboto" fontSize="14" letterSpacing=".25">
      <rect width={W} height={H} fill="#333" />
      <rect y="33" width={W} height="117" fill="#414141" />
      <rect y="150" width={W} height="2" fill="#424242" />
      <rect width="94" height="33" fill="#232323" />
      <rect y="33" width="94" height="117" fill="#2c2c2c" />
      <rect y="152" width="94" height="41" fill="#232323" />
      <rect x="1034" width="95" height="33" fill="#232323" />
      <rect x="1034" y="33" width="95" height="117" fill="#2c2c2c" />
      <rect x="1034" y="152" width="95" height="41" fill="#232323" />
      {marks}
      <path d="M1033 0V193" stroke="#8e1d1d" strokeWidth="1.500" />
      <path d="M1027 0H1034V8ZM1027 193H1034V185Z" fill="#8e1d1d" />
      <path d="M86 1H102V24L94 33L86 24ZM94 152L102 161V192H86V161Z" fill="#705f5d" stroke="#857370" />
      <path d="M94 1V192" stroke="#2b8a33" strokeWidth="1.500" />
      <path d="M94 3V33M94 153V190" stroke="#6d8f5f" strokeWidth="1.500" />
      <path d="M95 0H101L95 6ZM95 192H101L95 186Z" fill="#4b8a4b" />
      <g fill="#bcbcbc" fontSize="15">
        <text x="105" y="15">0.00 s</text>
        <text x="105" y="189">0.00 s</text>
      </g>
    </svg>
  );
}

/* ---------- Sections ---------- */

function TopBar() {
  return (
    <>
      <TitleBar>
        <LogoSlot><UnrealMark /></LogoSlot>
        <DocTab><WidgetIcon /><DocTitle>UI_SkillTree</DocTitle><Cross /></DocTab>
        <Spacer />
        <GraduationBadge />
        <WindowControls>
          <WindowButton $w={31}><svg width="14" height="6"><rect y="2" width="13" height="4" fill="#f4f4f4" /></svg></WindowButton>
          <WindowButton $w={28}>
            <svg width="14" height="14"><path d="M4.500 3V1.500H12.500V9.500H11" fill="none" stroke="#f4f4f4" strokeWidth="2" /><rect x="2" y="5" width="7" height="7" fill="none" stroke="#f4f4f4" strokeWidth="3" /></svg>
          </WindowButton>
          <WindowButton $w={51}><svg width="14" height="14"><path d="M2 2L12 12M12 2L2 12" stroke="#f4f4f4" strokeWidth="3.200" /></svg></WindowButton>
        </WindowControls>
      </TitleBar>
      <MenuBar>
        {["파일", "편집", "애셋", "뷰", "디버그", "창", "도움말"].map((m) => <span key={m}>{m}</span>)}
        <ParentClass>부모 클래스:<ClassLink>User Widget</ClassLink></ParentClass>
      </MenuBar>
      <ToolBar>
        <ToolGroup>
          <ToolSection $w={100} $pad={5}>
            <ToolButton $w={56}><CompileIcon /><span>컴파일</span></ToolButton>
            <Caret $m="34px 0 0 16px" />
          </ToolSection>
          <ToolSection $w={141} $pad={6}>
            <ToolButton $w={56}><SaveIcon /><span>저장</span></ToolButton>
            <ToolButton $w={80}><BrowseIcon /><span>둘러보기</span></ToolButton>
          </ToolSection>
          <ToolSection $w={108} $pad={1}>
            <ToolButton $w={102}><ReflectorIcon /><span>위젯 리플렉터</span></ToolButton>
          </ToolSection>
          <ToolSection $w={361} $pad={4} $last>
            <ToolButton $w={56}><PlayBig /><span>플레이</span></ToolButton>
            <Caret $m="34px 7px 0 17px" />
            <DebugFilter>
              <DebugCombo>선택된 디버그 오브젝트가 없습니다.<Caret $c="#000" $s={5} /></DebugCombo>
              <span>디버그 필터</span>
            </DebugFilter>
          </ToolSection>
        </ToolGroup>
        <ModeSwitch>
          <Mode $w={165} $on>
            <DesignerIcon />디자이너
          </Mode>
          <svg width="21" height="26" viewBox="1 0 22 26"><path d="M6 1L13 13L6 25" fill="none" stroke="#b5b5b5" strokeWidth="2" /></svg>
          <Mode $w={139} $pl={5}><GraphIcon />그래프</Mode>
        </ModeSwitch>
      </ToolBar>
    </>
  );
}

function PalettePanel() {
  return (
    <Dock>
      <PanelTab><PaletteGlyph /><span>팔레트</span><Cross /></PanelTab>
      <PanelBody>
        <SearchField $w={271} $m="5px 0 0 5px">팔레트 검색<Magnifier /></SearchField>
        <PaletteScroll>
          <PaletteList>
            {PALETTE_GROUPS.map((g) => <Category key={g}><Arrow />{g}</Category>)}
            <Category><Arrow open />일반</Category>
            {PALETTE_ITEMS.map(([k, t]) => <PaletteItem key={t}><KindIcon k={k} />{t}</PaletteItem>)}
          </PaletteList>
          <ScrollThumb $h={138} $m="3px 0 0 2px" />
        </PaletteScroll>
      </PanelBody>
    </Dock>
  );
}

function HierarchyPanel() {
  return (
    <Dock>
      <PanelTab $active><HierarchyGlyph /><span>계층구조</span><Cross /></PanelTab>
      <PanelBody>
        <PanelInner>
          <SearchField $w={266} $m="0 0 5px 5px">위젯 검색<Magnifier /></SearchField>
          {TREE.map((r, i) => {
            const c = r.sel ? "#000" : "#dcdcdc";
            return (
              <TreeRow key={i} $indent={r.i} $sel={r.sel} $bold={r.bold} $root={r.root}>
                {r.open !== undefined && <Arrow open={r.open} sel={r.sel} />}
                {r.k && <KindIcon k={r.k} />}
                <TreeLabel>{r.label}</TreeLabel>
                {!r.root && <TreeActions><OpenLock c={c} /><Eye c={c} /></TreeActions>}
              </TreeRow>
            );
          })}
        </PanelInner>
      </PanelBody>
    </Dock>
  );
}

const ToolGlyph = ({ children }) => <svg width="22" height="22" viewBox="0 0 22 22">{children}</svg>;

function DesignerPanel() {
  return (
    <Designer>
      <DesignSurface />
      <Hud $x={30} $y={28} $ls={0.7}>줌 -4</Hud>
      <Hud $x={227} $y={519}>스케일 1.0</Hud>
      <Hud $x={226} $y={551} $ls={0.8}>존 설정 없음</Hud>
      <Hud $x={980} $y={580.5} $ls={0.8}>DPI 스케일 0.67</Hud>
      <ViewTools>
        <Pill>
          <PillCell $w={29}><ToolGlyph><circle cx="11" cy="11" r="9.500" fill="#9a9a9a" stroke="#444" /><path d="M3 6L6 2.500L10 2L12 4L10 6L11 8L8 9L7 11L9 13L8 17L6 16L5 12L2.500 10ZM14 3L18 5L20 9V13L17 17L15 15L15 12L12 11L13 7L15 6Z" fill="#161616" /></ToolGlyph></PillCell>
          <PillCell $w={49} $div $pb={4}>없음<TinyCaret $s={3} $c="#111" /></PillCell>
        </Pill>
        <Pill $ml={3}><PillCell $w={27} $on><ToolGlyph><rect x="2" y="2" width="18" height="18" fill="none" stroke="#a09a8a" strokeWidth="2" strokeDasharray="4 2" /></ToolGlyph></PillCell></Pill>
        <Pill><PillCell $w={27} $on><ToolGlyph><rect x="5" y="10" width="12" height="9" rx="1" fill="#1c1c1c" /><path d="M7.500 10V6.500C7.500 2 14.500 2 14.500 6.500V10" fill="none" stroke="#3a2a10" strokeWidth="1.800" /></ToolGlyph></PillCell></Pill>
        <Pill $ml={3}>
          <PillCell $w={29} $on><ToolGlyph><rect x="2" y="3" width="5" height="15" rx="2" fill="#3b3b3b" /><rect x="8" y="3" width="12" height="5" rx="2" fill="#3b3b3b" /><rect x="8" y="9" width="12" height="10" rx="3" fill="#3b3b3b" /></ToolGlyph></PillCell>
          <PillCell $w={28} $c="#555">R</PillCell>
        </Pill>
        <Pill $ml={3}>
          <PillCell $w={28} $on><ToolGlyph><path d="M3 3H19V19H3ZM7 3V19M11 3V19M15 3V19M3 7H19M3 11H19M3 15H19" fill="none" stroke="#111" strokeWidth="1.600" /></ToolGlyph></PillCell>
          <PillCell $w={30} $div $pb={5}>4<TinyCaret $s={3} $c="#111" /></PillCell>
        </Pill>
        <Pill $h={29}><PillCell $w={26}><ToolGlyph><path d="M2 2V20M20 2V20M6 2H16M6 20H16M11 4V18M4 11H18M8 7L11 4L14 7M8 15L11 18L14 15M7 9L4 11L7 13M15 9L18 11L15 13" fill="none" stroke="#666" strokeWidth="1.400" /></ToolGlyph></PillCell></Pill>
        <Pill $bg="#666" $h={28}><PillCell $w={26}><ToolGlyph><path d="M2 4V19H20V4" fill="none" stroke="#3a3a3a" /><path d="M2 18L4 14L6 9L11 14L15 9L20 18Z" fill="#333" /><path d="M3 5H7V8H3Z" fill="#444" /></ToolGlyph></PillCell></Pill>
        <Pill $bg="#666" $h={28}><PillCell $w={26}><ToolGlyph><path d="M8 4V18H2Z" fill="none" stroke="#333" /><path d="M11 4V18" stroke="#444" /><path d="M13 4V18H20Z" fill="#333" /></ToolGlyph></PillCell></Pill>
        <Pill $h={26}><PillCell $w={81} $pt={1}>화면 크기<Caret $c="#111" /></PillCell></Pill>
        <Pill $h={26}><PillCell $w={93} $pt={1}>Fill Screen<Caret $c="#111" /></PillCell></Pill>
      </ViewTools>
      <WidgetButton $x={588} $y={258} $w={67}><WidgetFace>Superior<br />Health</WidgetFace></WidgetButton>
      <WidgetButton $x={584} $y={308} $w={74}><WidgetFace>Advanced<br />Health</WidgetFace></WidgetButton>
      <WidgetButton $x={585} $y={358} $w={73}><WidgetFace $pt={1}>Improved<br />Health</WidgetFace></WidgetButton>
      <OnCanvas $x={422} $y={489} $fs={13}>텍스트 블록</OnCanvas>
      <CloseWidget $x={607} $y={491}>닫기</CloseWidget>
    </Designer>
  );
}

function Prop({ h, indent, open, label, pl, children }) {
  return (
    <PropRow $h={h}>
      <PropName $indent={indent}>{open !== undefined && <Arrow open={open} />}<span>{label}</span></PropName>
      <PropValue $pl={pl}>{children}</PropValue>
    </PropRow>
  );
}

function DetailsPanel() {
  const finder = <Magnifier s={16} c="#a8a8a8" w={2.8} />;
  const sound = (
    <>
      <AssetCombo $w={138} $h={26}>없음<Caret /></AssetCombo>
      <AssetButtons $pl={13}><UseArrow />{finder}</AssetButtons>
    </>
  );
  return (
    <Dock $w={417}>
      <PanelTab $w={187}><InfoGlyph /><span>디테일</span><Cross /></PanelTab>
      <PanelBody $pl={2}>
        <NameRow><TextField $w={251} $c="#8c8c8c" $fs={15}>이름</TextField><CheckBox /><span>변수인지</span></NameRow>
        <FilterRow>
          <SearchField $w={317}>검색 디테일<Magnifier /></SearchField>
          <GridButton>
            <svg width="18" height="18"><path d="M0 1.500H5M6 1.500H11M12 1.500H17M0 5H5M6 5H11M12 5H17M0 8.500H5M6 8.500H11M12 8.500H17M0 12H5M6 12H11M12 12H17M0 15.500H5M6 15.500H11M12 15.500H17" stroke="#6e6e6e" strokeWidth="2.200" /></svg>
          </GridButton>
          <svg width="21" height="13" viewBox="0 0 21 13"><path d="M0 6.500C5 0 16 0 21 6.500C16 13 5 13 0 6.500Z" fill="#d5d8dc" /><circle cx="10.500" cy="6.500" r="4.500" fill="#5a6f94" /><circle cx="10.500" cy="5" r="2" fill="#c9d5e8" /></svg>
          <Caret $m="0 0 0 4px" $c="#b0b0b0" />
        </FilterRow>
        <PropertyArea>
          <SectionHead><Arrow open />Appearance</SectionHead>
          <Prop h={29} indent={5} pl={13} open label="Style"><ResetArrow /></Prop>
          <Prop h={30} indent={17} open={false} label="Normal"><Swatch $w={137} $h={23} $bg="linear-gradient(#dcdcdc, #c6c6c6 48%, #b0b0b0 52%, #b4b4b4)" /></Prop>
          <Prop h={30} indent={17} open={false} label="Hovered"><Swatch $w={137} $h={23} $bg="linear-gradient(#dedede, #dadada 48%, #e6e6e6 60%, #f0f0f0)" /></Prop>
          <Prop h={30} indent={17} open={false} label="Pressed"><Swatch $w={137} $h={23} $bg="linear-gradient(#b8b8b8, #c6c6c6 46%, #aaa 52%, #a2a2a2)" /></Prop>
          <Prop h={30} indent={17} open label="Disabled"><Swatch $w={137} $h={23} $mr={5} $bg="#000" $flat /><ResetArrow /></Prop>
          <Prop h={98} indent={45} label="Image">
            <Thumb>None</Thumb>
            <AssetStack>
              <AssetCombo $w={133} $h={23}>없음<Caret /></AssetCombo>
              <AssetButtons $pl={8}><UseArrow />{finder}</AssetButtons>
            </AssetStack>
          </Prop>
          <Prop h={32} indent={30} open={false} label="Image Size">
            <AxisField $w={112} $h={21}>X 0.0</AxisField>
            <AxisField $w={112} $h={21}>Y 0.0</AxisField>
          </Prop>
          <Prop h={27} indent={30} open={false} label="Tint">
            <Swatch $w={177} $h={15} $bg="#000" $flat /><CheckBox $ml={4} $mr={3} /><Inherit>상속</Inherit><ResetArrow />
          </Prop>
          <Prop h={32} indent={45} label="Draw As"><EnumCombo>Box<Caret $c="#000" /></EnumCombo><ResetArrow /></Prop>
          <Prop h={30} indent={30} open={false} label="Margin"><TextField $w={228} $h={24}>0.0</TextField></Prop>
          <Prop h={30} indent={17} open={false} label="Normal Padding"><TextField $w={228} $h={24}>2.0</TextField></Prop>
          <Prop h={30} indent={17} open={false} label="Pressed Padding"><TextField $w={228} $h={23}>2.0, 3.0, 2.0, 1.0</TextField></Prop>
          <Prop h={32} indent={33} label="Pressed Sound">{sound}</Prop>
          <Prop h={32} indent={33} label="Hovered Sound">{sound}</Prop>
          <PropScroll $h={174} $m="0" />
        </PropertyArea>
      </PanelBody>
    </Dock>
  );
}

function AnimationPanel() {
  return (
    <Dock $w={287}>
      <PanelTab><BrushGlyph /><span>애니메이션</span><Cross /></PanelTab>
      <PanelBody>
        <PanelInner>
          <AnimBar>
            <AddAnimation>
              <svg width="14" height="14"><path d="M7 1V13M1 7H13" stroke="#fff" strokeWidth="3.500" /></svg>애니메이션
            </AddAnimation>
            <SearchField $w={170} $h={23} $m="1px 0 0">애니메이션 검색</SearchField>
          </AnimBar>
        </PanelInner>
      </PanelBody>
    </Dock>
  );
}

function SequencerPanel() {
  return (
    <Dock $w={1625}>
      <PanelTab $w={376} $bg="#454545"><TabGap /><span>컴파일러 결과</span><Cross /></PanelTab>
      <SequencerBody>
        <SeqToolbar>
          <svg width="26" height="26" viewBox="0 0 26 26"><path d="M13 0L18 5L13 10L8 5ZM13 16L18 21L13 26L8 21ZM5 8L10 13L5 18L0 13ZM21 8L26 13L21 18L16 13Z" fill="#9a9a9a" /></svg>
          <SeqDivider $ml={13} $mr={6} />
          <SnapButton>
            <svg width="24" height="26"><path d="M4 18V11C4 0 20 0 20 11V18" fill="none" stroke="#a5a09d" strokeWidth="6" /><path d="M1 21H7V25H1ZM17 21H23V25H17Z" fill="#a5a09d" /></svg>
          </SnapButton>
          <Caret $m="0 0 0 15px" $c="#9a9a9a" />
          <SeqDivider $ml={10} $mr={14} />
          20 fps<Caret $m="0 0 0 3px" $c="#9a9a9a" />
          <SeqDivider $ml={18} $mr={12} />
          <svg width="30" height="30" viewBox="0 0 30 30"><path d="M3 28L4 3C14 1 14 27 26 27C22 24 21 20 21 14" fill="none" stroke="#8d8d8d" strokeWidth="2.200" /><path d="M0 1H5V5H0ZM0 26H5V30H0ZM24 25H28V29H24Z" fill="#8d8d8d" /><path d="M20 0L29 5L20 10Z" fill="#a5a5a5" /></svg>
          <svg width="33" height="20" viewBox="-13 0 33 20"><rect x="6" y="10" width="13" height="8" rx="1" fill="#8d8d8d" /><path d="M3 9V5C3 0 9 0 9 5V10" fill="none" stroke="#8d8d8d" strokeWidth="1.800" /><path d="M12.500 12V16" stroke="#444" strokeWidth="2" /></svg>
        </SeqToolbar>
        <SeqSplit>
          <TrackColumn>
            <TrackSearch><SearchField $w={371} $bg="#7d7d7d"><span /><Magnifier c="#2e2e2e" /></SearchField>0.00 s</TrackSearch>
            <Transport>
              <svg width="170" height="24" viewBox="0 0 170 24" fill="#7e7e7e">
                <path d="M3 1L22 12L3 23ZM39 4H42V20H39ZM44 3L55 12L44 21ZM75 3L88 12L75 21ZM93 4H96V20H93ZM98 4H101V20H98ZM103 4H106V20H103ZM107 3L118 12L107 21Z" />
                <path d="M67.500 7.500L72 12L67.500 16.500L63 12Z" fill="none" stroke="#7e7e7e" strokeWidth="2" />
                <path d="M130 2H136V10L134 12L136 14V22H130V20H132.500V4H130ZM147 10.500H159V6.500L167 12L159 17.500V13.500H147Z" />
              </svg>
            </Transport>
          </TrackColumn>
          <Timeline>
            <TimelineChart />
            <EmptyNotice>선택된 애니메이션 없음</EmptyNotice>
          </Timeline>
        </SeqSplit>
      </SequencerBody>
    </Dock>
  );
}

function Menus() {
  return (
    <>
      <Popup $x={165} $y={666} $w={181} $h={224}>
        <PopupTitle>편집</PopupTitle>
        {EDIT_ITEMS.map(([k, t, s, off]) => (
          <PopupItem key={t} $off={off} $pl={24} $pr={5}>
            <svg width="20" height="20" viewBox="0 0 20 20">{MENU_ICON[k]}</svg>
            <ItemLabel $ml={6}>{t}</ItemLabel>
            <Shortcut $off={off}>{s}</Shortcut>
          </PopupItem>
        ))}
        <PopupRule />
        <PopupItem $on $pr={2}>
          <ItemLabel>감싸기...</ItemLabel>
          <svg width="6" height="10"><path d="M0 0L6 5L0 10Z" fill="#111" /></svg>
        </PopupItem>
      </Popup>
      <Popup $x={344} $y={430} $w={186} $h={600}>
        <PopupTitle>감싸기...</PopupTitle>
        {WRAP_ITEMS.map((t) => <PopupItem key={t} $ls={0.3} $on={t === "Size Box"}>{t}</PopupItem>)}
      </Popup>
    </>
  );
}

function WindowsBar() {
  return (
    <TaskBar>
      <StartButton>
        <svg width="20" height="20" viewBox="0 0 20 20"><path d="M0 3L8.500 1.700V9.500H0ZM9.500 1.500L20 0V9.500H9.500ZM0 10.500H8.500V18.300L0 17ZM9.500 10.500H20V20L9.500 18.500Z" fill="#fff" /></svg>
      </StartButton>
      <TaskSearch>Windows 검색</TaskSearch>
      <TaskButton $w={60}>
        <svg width="26" height="20" viewBox="0 0 26 20" fill="none" stroke="#e8e8e8" strokeWidth="1.400"><rect x="5" y="2" width="15" height="16" /><path d="M3 4H1V16H3M22 4H24.500V16H22" /></svg>
      </TaskButton>
      <TaskButton $w={50} $mx={9} $run>
        <svg width="28" height="28" viewBox="0 0 28 28">
          <circle cx="14" cy="14" r="13.500" fill="#f2c31b" />
          <path d="M2.300 7.200A13.500 13.500 0 0 1 25.700 7.200H14A6.500 6.500 0 0 0 8.200 17Z" fill="#dc4a3a" />
          <path d="M2.300 7.200A13.500 13.500 0 0 0 14 27.500L19.600 17.500A6.500 6.500 0 0 1 8.200 17Z" fill="#2c9f58" />
          <circle cx="14" cy="14" r="6.300" fill="#fff" /><circle cx="14" cy="14" r="5" fill="#4686ee" />
        </svg>
      </TaskButton>
      <TaskButton $w={56}>
        <svg width="28" height="24" viewBox="0 0 28 24"><path d="M0 1H10L12 4H28V23H0Z" fill="#f0c050" /><path d="M0 7H28V23H0Z" fill="#fbdc83" /><path d="M5 23V14H23V23H18V19H10V23Z" fill="#3c9be0" /></svg>
      </TaskButton>
      <TaskButton $w={54} $mx={6}>
        <svg width="28" height="28" viewBox="0 0 28 28"><path d="M0 7H28V26H0Z" fill="#fff" /><path d="M9 7V2H19V7" fill="none" stroke="#fff" strokeWidth="2" /><path d="M8.500 10.500H13.300V15.300H8.500Z" fill="#e8502a" /><path d="M14.500 10.500H19.300V15.300H14.500Z" fill="#7ab51d" /><path d="M8.500 16.500H13.300V21.300H8.500Z" fill="#2a9fe0" /><path d="M14.500 16.500H19.300V21.300H14.500Z" fill="#f6b619" /></svg>
      </TaskButton>
      <TaskButton $w={60} $on $run>
        <svg width="30" height="30" viewBox="0 0 30 30"><circle cx="15" cy="15" r="14" fill="#0a0a0a" stroke="#d0d0d0" strokeWidth="1.500" /><g transform="translate(5.500 6.500) scale(.64)"><path fill="#fff" d={UNREAL} /></g></svg>
      </TaskButton>
      <Tray>
        <svg width="16" height="10"><path d="M1 9L8 1.500L15 9" fill="none" stroke="#e8e8e8" strokeWidth="1.500" /></svg>
        <svg width="21" height="15" viewBox="0 0 21 15"><rect x="5.500" y="4.500" width="13" height="9" fill="#fff" stroke="#fff" /><path d="M19.500 7H21V11H19.500ZM0 3H6V6L3.500 8V13H2.500V8L0 6ZM1 0H2V3H1ZM4 0H5V3H4Z" fill="#fff" /><path d="M6.500 3.500V6L4.200 8V13" fill="none" stroke="#03050a" strokeWidth=".9" /></svg>
        <svg width="20" height="13" viewBox="0 0 20 13"><path d="M5 13C-1 13-1 7 3 6C4 0 11-1 13 4C17 3 19 6 18 8C21 9 20 13 17 13Z" fill="#fff" /><path d="M6 12C4 8 7 5 11 6" fill="none" stroke="#111" /></svg>
        <svg width="20" height="18" viewBox="1 0 20 18" fill="none" stroke="#e8e8e8" strokeWidth="1.200"><path d="M1.600 6H4L8 2V16L4 12H1.600Z" /><path d="M11 6.500Q13 9 11 11.500" /><path d="M14 4Q17.500 9 14 14M17 2Q21.500 9 17 16" stroke="#666" /></svg>
        <svg width="17" height="16" viewBox="0 0 17 16" fill="none" stroke="#d8d8d8" strokeWidth="1.300"><path d="M1 15C1 8 6 1 16 1M5 15C5 10 9 5 16 5M9 15C9 12 12 9 16 9" /><circle cx="14" cy="13.500" r="1.200" fill="#d8d8d8" /></svg>
        <svg width="18" height="18" viewBox="0 0 18 18"><circle cx="9" cy="9" r="9" fill="#8b8b8b" /><path d="M5.500 5L12.500 13M12.500 5L5.500 13" stroke="#0b0b0b" strokeWidth="1.800" /></svg>
        <Ime>한</Ime>
        <Clock>오후 9:24<br />2019-01-24</Clock>
        <svg width="32" height="38" viewBox="0 -4 32 38"><path d="M2 0H22V18H15L12 22V18H2Z" fill="#fff" /><path d="M5 5H19M5 9H19M5 13H14" stroke="#222" strokeWidth="1.300" /><circle cx="21" cy="23.500" r="9.500" fill="#2b2b2b" stroke="#8a8a8a" /><text x="21" y="28.500" fill="#fff" fontSize="14" fontWeight="700" textAnchor="middle">2</text></svg>
        <PeekEdge />
      </Tray>
    </TaskBar>
  );
}

export default function App() {
  return (
    <Shell>
      <GlobalStyle />
      <TopBar />
      <Workspace>
        <UpperDock>
          <LeftColumn><PalettePanel /><HierarchyPanel /></LeftColumn>
          <DesignerPanel />
          <DetailsPanel />
        </UpperDock>
        <LowerDock><AnimationPanel /><SequencerPanel /></LowerDock>
      </Workspace>
      <WindowsBar />
      <Menus />
    </Shell>
  );
}
